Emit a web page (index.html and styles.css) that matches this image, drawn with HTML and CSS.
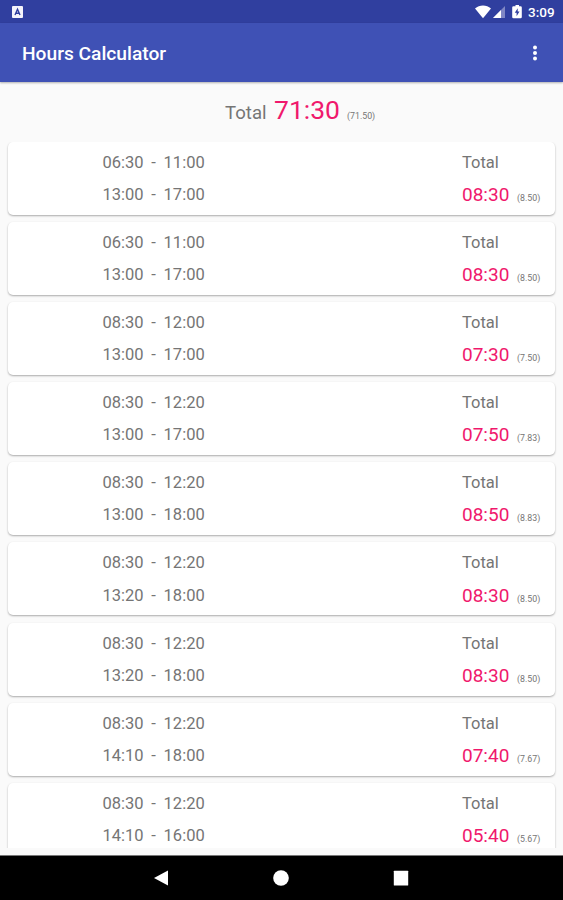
FILE: index.html
```html
<!DOCTYPE html>
<html lang="en">
<head>
  <meta charset="UTF-8">
  <meta name="viewport" content="width=device-width, initial-scale=1">
  <title>Hours Calculator</title>
  <link rel="stylesheet" href="styles.css">
</head>
<body>

  <div class="status-bar">
    <svg class="app-icon" width="11" height="12" viewBox="0 0 11 12">
      <rect width="11" height="12" rx="1" fill="#f4f4fb"/>
      <path d="M3 9L5.5 3.2L8 9M4 7.2H7" fill="none" stroke="#303f9f" stroke-width="1.4"/>
    </svg>
    <svg class="status-icons" width="50" height="16" viewBox="0 0 50 16">
      <path d="M0 4.6C4.5 0.6 11.5 0.6 16 4.6L8 14.2Z" fill="#fff"/>
      <path d="M30 2V14H18Z" fill="#8087c4"/>
      <path d="M26 6V14H18Z" fill="#fff"/>
      <path d="M38.500 2.200H40.500V1H44V2.200H45.500Q46.800 2.200 46.800 3.500V13Q46.800 14.300 45.500 14.300H38.500Q37.200 14.300 37.200 13V3.500Q37.200 2.200 38.500 2.200Z" fill="#fff"/>
      <path d="M42.700 4.300L39.800 8.800H41.600V12.200L44.500 7.600H42.700Z" fill="#303f9f"/>
    </svg>
    <span class="clock">3:09</span>
  </div>

  <header>
    <h1>Hours Calculator</h1>
    <svg width="6" height="16" viewBox="0 0 6 16" fill="#fff">
      <circle cx="3" cy="2.5" r="2"/>
      <circle cx="3" cy="8" r="2"/>
      <circle cx="3" cy="13.5" r="2"/>
    </svg>
  </header>

  <div class="summary">
    <span class="summary-label">Total</span>
    <span class="summary-hours">71:30</span>
    <span class="decimal">(71.50)</span>
  </div>

  <main class="days">
    <div class="card">
      <div class="times"><p>06:30<i>-</i>11:00</p><p>13:00<i>-</i>17:00</p></div>
      <div class="total"><p>Total</p><p><b>08:30</b><span class="decimal">(8.50)</span></p></div>
    </div>
    <div class="card">
      <div class="times"><p>06:30<i>-</i>11:00</p><p>13:00<i>-</i>17:00</p></div>
      <div class="total"><p>Total</p><p><b>08:30</b><span class="decimal">(8.50)</span></p></div>
    </div>
    <div class="card">
      <div class="times"><p>08:30<i>-</i>12:00</p><p>13:00<i>-</i>17:00</p></div>
      <div class="total"><p>Total</p><p><b>07:30</b><span class="decimal">(7.50)</span></p></div>
    </div>
    <div class="card">
      <div class="times"><p>08:30<i>-</i>12:20</p><p>13:00<i>-</i>17:00</p></div>
      <div class="total"><p>Total</p><p><b>07:50</b><span class="decimal">(7.83)</span></p></div>
    </div>
    <div class="card">
      <div class="times"><p>08:30<i>-</i>12:20</p><p>13:00<i>-</i>18:00</p></div>
      <div class="total"><p>Total</p><p><b>08:50</b><span class="decimal">(8.83)</span></p></div>
    </div>
    <div class="card">
      <div class="times"><p>08:30<i>-</i>12:20</p><p>13:20<i>-</i>18:00</p></div>
      <div class="total"><p>Total</p><p><b>08:30</b><span class="decimal">(8.50)</span></p></div>
    </div>
    <div class="card">
      <div class="times"><p>08:30<i>-</i>12:20</p><p>13:20<i>-</i>18:00</p></div>
      <div class="total"><p>Total</p><p><b>08:30</b><span class="decimal">(8.50)</span></p></div>
    </div>
    <div class="card">
      <div class="times"><p>08:30<i>-</i>12:20</p><p>14:10<i>-</i>18:00</p></div>
      <div class="total"><p>Total</p><p><b>07:40</b><span class="decimal">(7.67)</span></p></div>
    </div>
    <div class="card">
      <div class="times"><p>08:30<i>-</i>12:20</p><p>14:10<i>-</i>16:00</p></div>
      <div class="total"><p>Total</p><p><b>05:40</b><span class="decimal">(5.67)</span></p></div>
    </div>
  </main>

  <nav>
    <svg width="16" height="16" viewBox="0 0 16 16" fill="#fff"><path d="M1 8L15 0.5V15.5Z"/></svg>
    <svg width="16" height="16" viewBox="0 0 16 16" fill="#fff"><circle cx="8" cy="8" r="7.800"/></svg>
    <svg width="16" height="16" viewBox="0 0 16 16" fill="#fff"><rect x="0.8" y="0.8" width="14.4" height="14.8" rx="0.5"/></svg>
  </nav>

</body>
</html>
```
FILE: styles.css
```css
* {
  box-sizing: border-box;
}
body {
  margin: 0;
  height: 900px;
  display: flex;
  flex-direction: column;
  overflow: hidden;
  font-family: Roboto, "Liberation Sans", sans-serif;
  background: #fafafa;
  color: #757575;
}
/* Status bar */
.status-bar {
  flex: none;
  height: 23px;
  display: flex;
  align-items: center;
  padding: 0 8px 0 12px;
  background: #303f9f;
  color: #fff;
}
.status-icons {
  margin-left: auto;
}
.clock {
  width: 27px;
  margin-left: 3px;
  font-size: 13.5px;
  font-weight: 500;
  white-space: nowrap;
}
/* Toolbar */
header {
  flex: none;
  height: 59px;
  display: flex;
  align-items: center;
  justify-content: space-between;
  padding: 0 25px 0 22px;
  background: #3f51b5;
  color: #fff;
  box-shadow: 0 1px 2px rgba(0, 0, 0, 0.3);
}
header h1 {
  margin: 2px 0 0;
  font-size: 19.2px;
  font-weight: 500;
}
/* Overall total */
.summary {
  flex: none;
  height: 59.5px;
  padding-left: 225px;
  line-height: 55px;
  display: flex;
  align-items: baseline;
}
.summary-label {
  width: 49px;
  font-size: 18.6px;
}
.summary-hours {
  width: 73px;
  font-size: 26.5px;
  color: #f0186c;
}
.decimal {
  font-size: 8.8px;
}
/* Day cards */
.days {
  flex: none;
  height: 706.5px;
  padding: 0 8px;
  overflow: hidden;
}
.card {
  height: 73px;
  margin-bottom: 7.2px;
  padding: 5px 0 0 94.500px;
  display: flex;
  background: #fff;
  border-radius: 5px;
  box-shadow: 0 1px 2px rgba(0, 0, 0, 0.32);
}
.card p {
  margin: 0;
  height: 32.2px;
  line-height: 32px;
  font-size: 16.5px;
  white-space: nowrap;
}
.times {
  width: 359.5px;
}
.card i {
  display: inline-block;
  width: 20px;
  text-align: center;
  font-style: normal;
}
.total b {
  display: inline-block;
  width: 55px;
  font-size: 19px;
  font-weight: 400;
  color: #f0186c;
}
/* System navigation */
nav {
  flex: none;
  height: 45px;
  margin-top: auto;
  padding-right: 1px;
  display: flex;
  justify-content: center;
  align-items: center;
  gap: 104px;
  background: #000;
  border-top: 1px solid #777;
}
```
